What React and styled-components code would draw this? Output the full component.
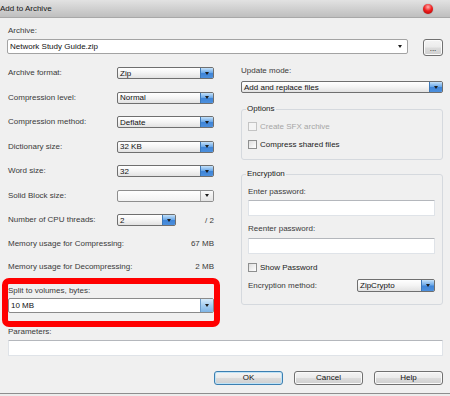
import React from 'react';
import styled, { createGlobalStyle, css } from 'styled-components';

const GlobalStyle = createGlobalStyle`
  html, body {
    margin: 0;
    padding: 0;
    background: #f0f0f0;
  }
  body {
    font-family: "Liberation Sans", Arial, sans-serif;
    font-size: 8px;
    color: #3a3a3a;
  }
`;

const Window = styled.div`
  width: 450px;
  height: 396px;
  overflow: hidden;
  display: flex;
  flex-direction: column;
  background: #f0f0f0;
`;

const TitleBar = styled.div`
  height: 18px;
  flex: none;
  display: flex;
  align-items: center;
  justify-content: space-between;
  box-sizing: border-box;
  background: linear-gradient(#e2e2e2 0%, #d2d2d2 45%, #bfbfbf 100%);
  border-bottom: 1px solid #a8a8a8;
  color: #151515;
  font-size: 8px;
  line-height: 10px;
`;

const CloseDot = styled.span`
  width: 10px;
  height: 10px;
  margin-right: 17px;
  border-radius: 50%;
  background: radial-gradient(circle at 50% 30%, #ffb0b0 0%, #f02020 45%, #a80000 100%);
  box-shadow: 0 0 1px rgba(0, 0, 0, 0.5);
`;

const Body = styled.div`
  padding: 0 7px 0 8px;
`;

const Label = styled.div`
  line-height: 10px;
  height: 10px;
  white-space: nowrap;
  color: ${(p) => (p.$disabled ? '#a6a6a6' : '#3a3a3a')};
  margin-top: ${(p) => p.$mt || 0}px;
`;

const ArchiveRow = styled.div`
  margin-top: 3px;
  height: 17px;
  display: flex;
  align-items: flex-start;
  gap: 15px;
`;

const comboSkins = {
  list: css`
    border-color: #6f6f6f;
    background: linear-gradient(#ffffff 0%, #f4f4f4 50%, #e2e2e2 100%);
  `,
  edit: css`
    border-color: #a3a3a3;
    background: #ffffff;
  `,
  empty: css`
    border-color: #8e8e8e;
    background: linear-gradient(#ffffff, #f2f2f2);
  `,
  split: css`
    border-color: #8a8a8a;
    background: #ffffff;
  `,
};

const arrowSkins = {
  list: css`
    background: linear-gradient(#c5e2fa 0%, #6eaae9 45%, #3f85d8 55%, #4d90dd 100%);
    border-left: 1px solid #3c78b8;
  `,
  edit: css`
    background: transparent;
  `,
  empty: css`
    background: linear-gradient(#fafafa, #e4e4e4);
    border-left: 1px solid #a8a8a8;
  `,
  split: css`
    background: linear-gradient(#d8ecfb 0%, #a5cdf0 50%, #7fb5e6 100%);
    border-left: 1px solid #6c9bc9;
  `,
};

const Combo = styled.div`
  box-sizing: border-box;
  display: flex;
  align-items: stretch;
  flex: ${(p) => (p.$w ? 'none' : '1')};
  width: ${(p) => (p.$w ? `${p.$w}px` : 'auto')};
  height: ${(p) => p.$h || 12}px;
  margin-left: ${(p) => p.$ml || 0}px;
  border: 1px solid;
  border-radius: 2px;
  overflow: hidden;
  ${(p) => comboSkins[p.$skin || 'list']}
`;

const ComboText = styled.span`
  flex: 1;
  display: flex;
  align-items: center;
  padding-left: 2px;
  color: #111;
  white-space: nowrap;
  overflow: hidden;
`;

const ComboArrow = styled.span`
  flex: none;
  width: ${(p) => (p.$skin === 'edit' ? 14 : 12)}px;
  display: flex;
  align-items: center;
  justify-content: center;
  ${(p) => arrowSkins[p.$skin || 'list']}

  &::after {
    content: '';
    border-left: 2.5px solid transparent;
    border-right: 2.5px solid transparent;
    border-top: 3px solid #1d1d1d;
  }
`;

const ComboBox = ({ value = '', skin = 'list', w, h, ml }) => (
  <Combo $skin={skin} $w={w} $h={h} $ml={ml}>
    <ComboText>{value}</ComboText>
    <ComboArrow $skin={skin} />
  </Combo>
);

const buttonFace = css`
  box-sizing: border-box;
  padding: 0;
  border: 1px solid #707070;
  border-radius: 3px;
  background: linear-gradient(#f4f4f4 0%, #ebebeb 48%, #dcdcdc 52%, #cfcfcf 100%);
  font-family: inherit;
  font-size: 8px;
  color: #111;
  line-height: 1;
`;

const BrowseButton = styled.button`
  ${buttonFace}
  width: 20px;
  height: 17px;
  flex: none;
  padding-top: 3px;
  box-shadow: inset 0 0 0 1px #fbfbfb;
`;

const Columns = styled.div`
  margin-top: 5px;
  display: grid;
  grid-template-columns: 206px 202px;
  column-gap: 27px;
  align-items: start;
`;

const LeftColumn = styled.div`
  display: flex;
  flex-direction: column;
`;

const FieldRow = styled.div`
  height: ${(p) => p.$h || 24.5}px;
  display: grid;
  grid-template-columns: 109px 1fr;
  align-items: center;
`;

const ValueRow = styled.div`
  height: ${(p) => p.$h || 22.5}px;
  display: flex;
  align-items: center;
  justify-content: space-between;
  white-space: nowrap;
`;

const SplitRow = styled.div`
  display: flex;
  align-items: center;
  justify-content: space-between;
`;

const Highlight = styled.div`
  margin: 0 -6px;
  padding: 2px 0 8px;
  border: 6px solid #ff0000;
  border-radius: 7px;
`;

const RightColumn = styled.div`
  display: flex;
  flex-direction: column;
  padding-top: 5px;
`;

const Group = styled.fieldset`
  margin: ${(p) => p.$mt || 0}px 0 0;
  padding: ${(p) => p.$pt || 0}px 7px ${(p) => p.$pb || 0}px 6px;
  border: 1px solid #d5d9de;
  border-radius: 3px;
  min-width: 0;
`;

const Legend = styled.legend`
  padding: 0 1px;
  margin-left: -2px;
  line-height: 10px;
  color: #202020;
`;

const CheckRow = styled.div`
  height: ${(p) => p.$h || 17.5}px;
  display: flex;
  align-items: center;
  gap: 3px;
  color: ${(p) => (p.$disabled ? '#a6a6a6' : '#222')};
`;

const Check = styled.span`
  box-sizing: border-box;
  width: 9px;
  height: 9px;
  border: 1px solid ${(p) => (p.$disabled ? '#c4c4c4' : '#8e8f8f')};
  background: ${(p) => (p.$disabled ? '#f4f4f4' : 'linear-gradient(135deg, #dedede, #ffffff)')};
`;

const TextInput = styled.div`
  box-sizing: border-box;
  height: ${(p) => p.$h || 16}px;
  margin-top: ${(p) => p.$mt || 0}px;
  background: #fff;
  border: 1px solid #dfe3e8;
  border-top-color: #b4b7bc;
  border-radius: 1px;
`;

const MethodRow = styled.div`
  margin-top: 3px;
  height: 13px;
  display: flex;
  align-items: center;
  justify-content: space-between;
`;

const ButtonRow = styled.div`
  margin-top: 15px;
  height: 14px;
  display: flex;
  justify-content: flex-end;
  gap: 11px;
`;

const DialogButton = styled.button`
  ${buttonFace}
  width: 69px;
  height: 14px;
  ${(p) =>
    p.$primary
      ? css`
          border-color: #3c7fb1;
          box-shadow: inset 0 0 0 1px #bfe3f7;
        `
      : css`
          box-shadow: inset 0 0 0 1px #fafafa;
        `}
`;

const BottomEdge = styled.div`
  margin-top: 8px;
  border-top: 1px solid #8e8e8e;
  flex: 1;
  background: #ececec;
`;

const leftFields = [
  { label: 'Archive format:', value: 'Zip' },
  { label: 'Compression level:', value: 'Normal' },
  { label: 'Compression method:', value: 'Deflate' },
  { label: 'Dictionary size:', value: '32 KB' },
  { label: 'Word size:', value: '32' },
  { label: 'Solid Block size:', value: '', skin: 'empty' },
];

const memory = [
  { label: 'Memory usage for Compressing:', value: '67 MB' },
  { label: 'Memory usage for Decompressing:', value: '2 MB' },
];

export default function App() {
  return (
    <Window>
      <GlobalStyle />
      <TitleBar>
        <span>Add to Archive</span>
        <CloseDot />
      </TitleBar>

      <Body>
        <Label $mt={8}>Archive:</Label>
        <ArchiveRow>
          <ComboBox value="Network Study Guide.zip" skin="edit" h={15} ml={-1} />
          <BrowseButton>...</BrowseButton>
        </ArchiveRow>

        <Columns>
          <LeftColumn>
            {leftFields.map((f) => (
              <FieldRow key={f.label}>
                <Label>{f.label}</Label>
                <ComboBox value={f.value} skin={f.skin} />
              </FieldRow>
            ))}
            <FieldRow>
              <Label>Number of CPU threads:</Label>
              <SplitRow>
                <ComboBox value="2" w={59} />
                <span>/ 2</span>
              </SplitRow>
            </FieldRow>
            {memory.map((m) => (
              <ValueRow key={m.label}>
                <span>{m.label}</span>
                <span>{m.value}</span>
              </ValueRow>
            ))}
            <Highlight>
              <Label>Split to volumes, bytes:</Label>
              <SplitRow style={{ marginTop: 2 }}>
                <ComboBox value="10 MB" skin="split" h={15} />
              </SplitRow>
            </Highlight>
          </LeftColumn>

          <RightColumn>
            <Label>Update mode:</Label>
            <SplitRow style={{ marginTop: 5 }}>
              <ComboBox value="Add and replace files" />
            </SplitRow>

            <Group $mt={11} $pt={4} $pb={6}>
              <Legend>Options</Legend>
              <CheckRow $disabled>
                <Check $disabled />
                Create SFX archive
              </CheckRow>
              <CheckRow>
                <Check />
                Compress shared files
              </CheckRow>
            </Group>

            <Group $mt={9} $pt={8} $pb={12}>
              <Legend>Encryption</Legend>
              <Label>Enter password:</Label>
              <TextInput $mt={3} />
              <Label $mt={8}>Reenter password:</Label>
              <TextInput $mt={4} />
              <CheckRow $h={17} style={{ marginTop: 5 }}>
                <Check />
                Show Password
              </CheckRow>
              <MethodRow>
                <span>Encryption method:</span>
                <ComboBox value="ZipCrypto" w={78} h={13} />
              </MethodRow>
            </Group>
          </RightColumn>
        </Columns>

        <Label>Parameters:</Label>
        <TextInput $mt={3} />

        <ButtonRow>
          <DialogButton $primary>OK</DialogButton>
          <DialogButton>Cancel</DialogButton>
          <DialogButton>Help</DialogButton>
        </ButtonRow>
      </Body>

      <BottomEdge />
    </Window>
  );
}
